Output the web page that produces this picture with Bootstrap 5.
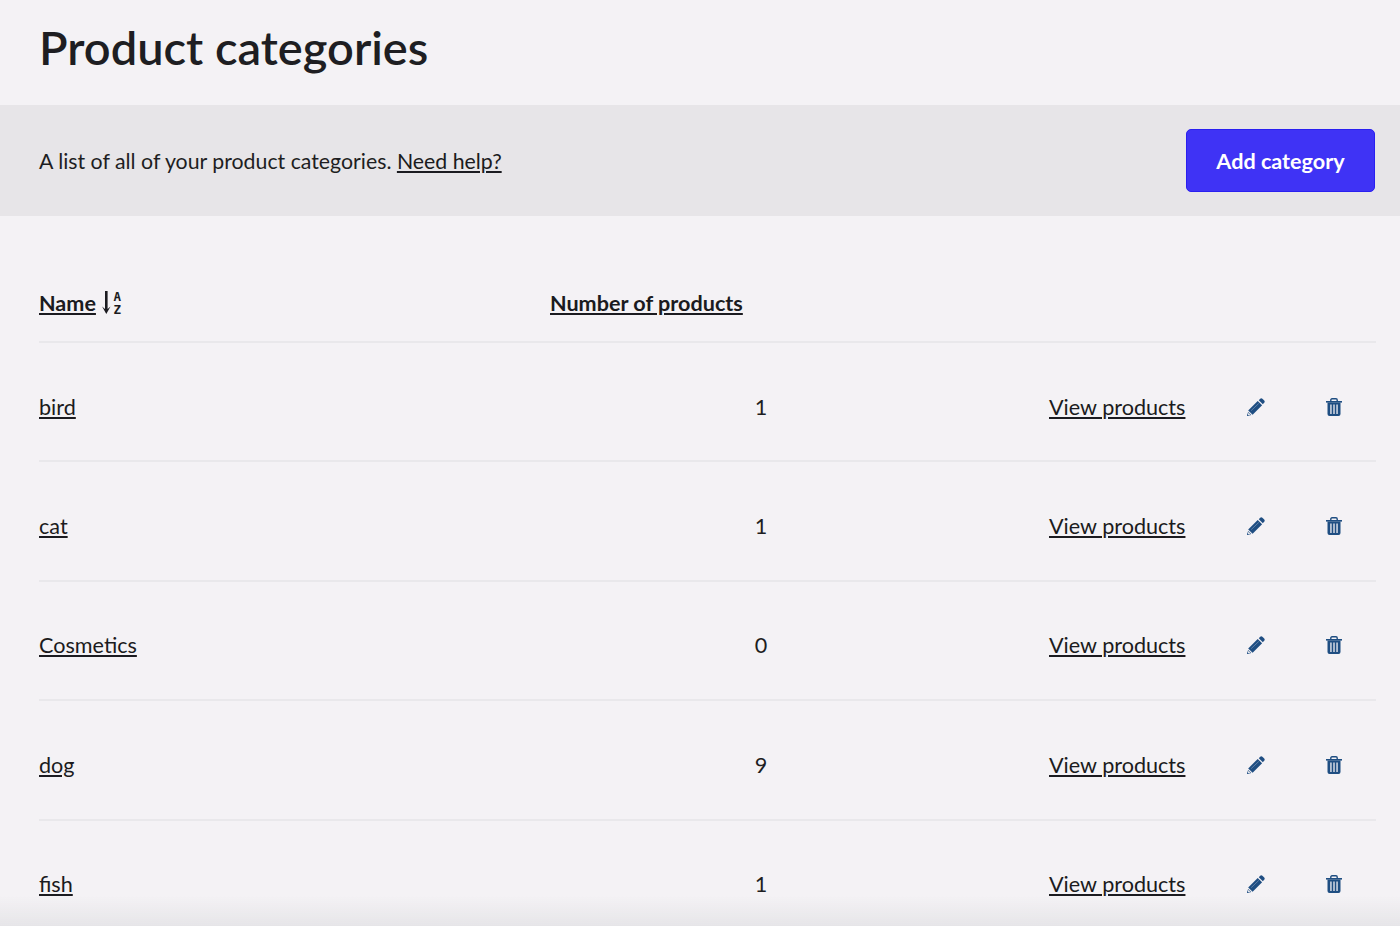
<!DOCTYPE html>
<html lang="en">
<head>
  <meta charset="UTF-8">
  <meta name="viewport" content="width=device-width, initial-scale=1.0">
  <title>Product categories</title>
  <link href="https://cdn.jsdelivr.net/npm/bootstrap@5.3.0/dist/css/bootstrap.min.css" rel="stylesheet">
  <style>
    html, body {
      height: 926px;
      overflow: hidden;
    }
    body {
      background-color: #f4f2f5;
      font-family: "Lato", "Liberation Sans", sans-serif;
      font-size: 21.6px;
      color: #1e1e22;
    }
    a {
      color: #1b1b20;
    }
    .page-title {
      font-size: 47px;
      font-weight: 600;
      line-height: 56px;
      margin: 0;
      padding: 19px 39px 30px;
    }
    .intro-bar {
      background-color: #e7e5e8;
      height: 111px;
      padding: 0 25px 0 39px;
    }
    .intro-text {
      font-size: 21.3px;
      padding-top: 2px;
    }
    .btn-add {
      background-color: #3f33f5;
      border: 1px solid #2a1ff0;
      border-radius: 5px;
      color: #fff;
      font-size: 21.6px;
      font-weight: 700;
      width: 189px;
      height: 63px;
      padding-top: 8px;
    }
    .btn-add:hover {
      background-color: #3226dd;
      color: #fff;
    }
    .cat-list {
      padding: 0 24px 0 39px;
    }
    .cat-head {
      height: 127px;
      padding-top: 49px;
      border-bottom: 2px solid #e9e8eb;
      font-weight: 700;
    }
    .cat-row {
      height: 119.4px;
      padding-top: 10px;
      border-bottom: 2px solid #e9e8eb;
    }
    .col-name {
      width: 511px;
    }
    .col-count {
      width: 422px;
      text-align: center;
    }
    .col-view {
      margin-left: 77px;
      width: 136px;
    }
    .col-edit {
      margin-left: 62px;
      width: 18px;
    }
    .col-del {
      margin-left: 61px;
      width: 16px;
    }
    .sort-icon {
      margin-left: 6px;
    }
    .sort-letter {
      font-family: "DejaVu Sans Mono", monospace;
      font-size: 12.5px;
      font-weight: 700;
      fill: #1b1b20;
    }
    .bottom-fade {
      position: fixed;
      left: 0;
      right: 0;
      bottom: 0;
      height: 30px;
      background: linear-gradient(to bottom, rgba(230, 229, 232, 0), rgba(230, 229, 232, 1));
      pointer-events: none;
    }
  </style>
</head>
<body>

  <!-- iconos de las filas -->
  <svg width="0" height="0" class="d-none">
    <symbol id="ico-edit" viewBox="0 0 18 18">
      <path d="M13.200.8a1.600 1.600 0 0 1 2.200 0l1.800 1.800a1.600 1.600 0 0 1 0 2.200l-1.400 1.400-4-4z" fill="#1f4e82"/>
      <path d="M10.700 2.900l4.400 4.400L5.600 16.800 1.200 12.400z" fill="#1f4e82"/>
      <path d="M4.200 12.600l7.600-7.200" stroke="#5f80a8" stroke-width="1" fill="none"/>
      <path d="M1.400 14.300l2.500 2.500L0 18z" fill="#f4f2f5" stroke="#1f4e82" stroke-width=".6"/>
      <path d="M0 18l.4-1.700 1.300 1.300z" fill="#1f4e82"/>
    </symbol>
    <symbol id="ico-trash" viewBox="0 0 16 18">
      <path d="M4.800 3.200V2a1.200 1.200 0 0 1 1.200-1.200h4A1.200 1.200 0 0 1 11.200 2v1.200" stroke="#1f4e82" stroke-width="1.400" fill="none"/>
      <rect x="0" y="3" width="16" height="1.600" fill="#1f4e82"/>
      <path fill-rule="evenodd" d="M1.500 4.600h13V16a2 2 0 0 1-2 2h-9a2 2 0 0 1-2-2zM4.300 6.500V16h1.300V6.500zm3.050 0V16h1.300V6.500zm3.050 0V16h1.300V6.500z" fill="#1f4e82"/>
    </symbol>
  </svg>

  <h1 class="page-title">Product categories</h1>

  <div class="intro-bar d-flex align-items-center justify-content-between">
    <div class="intro-text">A list of all of your product categories. <a href="#">Need help?</a></div>
    <a href="#" class="btn btn-add d-flex align-items-center justify-content-center">Add category</a>
  </div>

  <div class="cat-list">
    <div class="cat-head d-flex align-items-center">
      <div class="col-name d-flex align-items-center">
        <a href="#">Name</a>
        <svg class="sort-icon" width="20" height="28" viewBox="0 -2 20 28">
          <path d="M3 0h2.600v18l2.900-2.500-4.200 7.500L.1 15.500 3 18z" fill="#1b1b20"/>
          <text class="sort-letter" x="11.500" y="9.500">A</text>
          <text class="sort-letter" x="11.500" y="22.500">Z</text>
        </svg>
      </div>
      <div><a href="#">Number of products</a></div>
    </div>

    <div class="cat-row d-flex align-items-center">
      <div class="col-name"><a href="#">bird</a></div>
      <div class="col-count">1</div>
      <div class="col-view text-nowrap"><a href="#">View products</a></div>
      <a href="#" class="col-edit d-flex"><svg width="18" height="18"><use href="#ico-edit"/></svg></a>
      <a href="#" class="col-del d-flex"><svg width="16" height="18"><use href="#ico-trash"/></svg></a>
    </div>

    <div class="cat-row d-flex align-items-center">
      <div class="col-name"><a href="#">cat</a></div>
      <div class="col-count">1</div>
      <div class="col-view text-nowrap"><a href="#">View products</a></div>
      <a href="#" class="col-edit d-flex"><svg width="18" height="18"><use href="#ico-edit"/></svg></a>
      <a href="#" class="col-del d-flex"><svg width="16" height="18"><use href="#ico-trash"/></svg></a>
    </div>

    <div class="cat-row d-flex align-items-center">
      <div class="col-name"><a href="#">Cosmetics</a></div>
      <div class="col-count">0</div>
      <div class="col-view text-nowrap"><a href="#">View products</a></div>
      <a href="#" class="col-edit d-flex"><svg width="18" height="18"><use href="#ico-edit"/></svg></a>
      <a href="#" class="col-del d-flex"><svg width="16" height="18"><use href="#ico-trash"/></svg></a>
    </div>

    <div class="cat-row d-flex align-items-center">
      <div class="col-name"><a href="#">dog</a></div>
      <div class="col-count">9</div>
      <div class="col-view text-nowrap"><a href="#">View products</a></div>
      <a href="#" class="col-edit d-flex"><svg width="18" height="18"><use href="#ico-edit"/></svg></a>
      <a href="#" class="col-del d-flex"><svg width="16" height="18"><use href="#ico-trash"/></svg></a>
    </div>

    <div class="cat-row d-flex align-items-center">
      <div class="col-name"><a href="#">fish</a></div>
      <div class="col-count">1</div>
      <div class="col-view text-nowrap"><a href="#">View products</a></div>
      <a href="#" class="col-edit d-flex"><svg width="18" height="18"><use href="#ico-edit"/></svg></a>
      <a href="#" class="col-del d-flex"><svg width="16" height="18"><use href="#ico-trash"/></svg></a>
    </div>
  </div>

  <div class="bottom-fade"></div>

  <script src="https://cdn.jsdelivr.net/npm/bootstrap@5.3.0/dist/js/bootstrap.bundle.min.js"></script>
</body>
</html>
